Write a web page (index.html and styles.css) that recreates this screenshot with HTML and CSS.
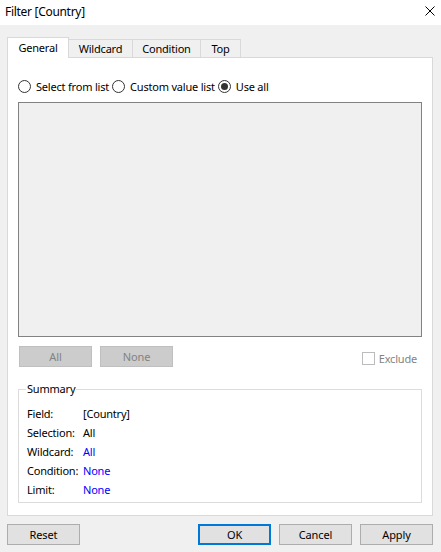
FILE: index.html
```html
<!DOCTYPE html>
<html>
<head>
<meta charset="utf-8">
<link rel="stylesheet" href="styles.css">
</head>
<body>
<div class="dialog">
  <div class="titlebar">
    <span class="title">Filter [Country]</span>
    <svg class="close" width="10" height="10" viewBox="0 0 10 10"><path d="M0.5 0.5 L9.5 9.5 M9.5 0.5 L0.5 9.5" stroke="#000" stroke-width="1" fill="none"/></svg>
  </div>
  <div class="body">
    <div class="tabs">
      <div class="tab active">General</div>
      <div class="tab">Wildcard</div>
      <div class="tab">Condition</div>
      <div class="tab">Top</div>
    </div>
    <div class="panel">
      <div class="radios">
        <label class="radio"><span class="circle"></span>Select from list</label>
        <label class="radio"><span class="circle"></span>Custom value list</label>
        <label class="radio"><span class="circle checked"></span>Use all</label>
      </div>
      <div class="listbox"></div>
      <div class="listactions">
        <button class="btn disabled">All</button>
        <button class="btn disabled">None</button>
        <span class="spacer"></span>
        <label class="check"><span class="box"></span>Exclude</label>
      </div>
      <fieldset class="summary">
        <legend>Summary</legend>
        <div class="rows">
          <span class="lbl">Field:</span><span class="val">[Country]</span>
          <span class="lbl">Selection:</span><span class="val">All</span>
          <span class="lbl">Wildcard:</span><span class="val link">All</span>
          <span class="lbl">Condition:</span><span class="val link">None</span>
          <span class="lbl">Limit:</span><span class="val link">None</span>
        </div>
      </fieldset>
    </div>
    <div class="footer">
      <button class="btn">Reset</button>
      <span class="spacer"></span>
      <button class="btn default">OK</button>
      <button class="btn">Cancel</button>
      <button class="btn">Apply</button>
    </div>
  </div>
</div>
</body>
</html>
```
FILE: styles.css
```css
* { box-sizing: border-box; }
html, body { margin: 0; padding: 0; }
body {
  width: 441px;
  height: 552px;
  background: #f0f0f0;
  font-family: "Noto Sans", sans-serif;
  font-size: 11px;
  letter-spacing: -0.2px;
  color: #000;
  overflow: hidden;
}
.dialog { width: 441px; height: 552px; display: flex; flex-direction: column; }
.titlebar {
  height: 25px;
  background: #fff;
  display: flex;
  align-items: center;
  padding: 0 6px 0 5px;
}
.title { flex: 1; font-size: 12px; line-height: 16px; margin-top: -2px; letter-spacing: -0.3px; }
.close { margin-top: -3px; }
.body { padding: 12px 8px 0 7px; flex: 1; display: flex; flex-direction: column; }
.tabs { display: flex; align-items: flex-end; height: 20px; }
.tab {
  height: 18px;
  border: 1px solid #d9d9d9;
  border-bottom: none;
  border-left: none;
  background: #f0f0f0;
  line-height: 18px;
  text-align: center;
  padding: 0;
}
.tab:nth-child(2) { width: 64px; }
.tab:nth-child(3) { width: 68px; }
.tab:nth-child(4) { width: 40px; }
.tab.active {
  width: 62px;
  height: 21px;
  margin-bottom: -1px;
  background: #fff;
  border-left: 1px solid #d9d9d9;
  line-height: 19px;
  position: relative;
  z-index: 1;
}
.panel {
  width: 426px;
  height: 459px;
  background: #fff;
  border: 1px solid #d9d9d9;
  padding: 20px 10px 0 10px;
  display: flex;
  flex-direction: column;
}
.radios { display: flex; align-items: center; height: 17px; }
.radio { display: flex; align-items: center; margin-right: 3px; }
.circle {
  width: 13px; height: 13px;
  border: 1px solid #333;
  border-radius: 50%;
  margin-right: 5px;
  display: inline-flex; align-items: center; justify-content: center;
}
.circle.checked::after {
  content: ""; width: 7px; height: 7px; border-radius: 50%; background: #333;
}
.listbox {
  margin-top: 7px;
  width: 404px;
  height: 235px;
  background: #f0f0f0;
  border: 1px solid #828282;
}
.listactions { display: flex; align-items: center; margin-top: 9px; height: 21px; padding-left: 1px; }
.btn {
  font-family: inherit;
  font-size: 11px;
  letter-spacing: -0.1px;
  width: 73px;
  height: 21px;
  background: #e1e1e1;
  border: 1px solid #adadad;
  color: #000;
  padding: 0;
  margin: 0 8px 0 0;
}
.btn.disabled { background: #cccccc; border-color: #bfbfbf; color: #838383; }
.spacer { flex: 1; }
.check { display: flex; align-items: center; color: #838383; margin-right: 5px; margin-top: 3px; }
.box { width: 13px; height: 13px; border: 1px solid #bcbcbc; margin-right: 4px; }
.summary {
  margin: 15px 0 0 0;
  width: 404px;
  height: 121px;
  border: 1px solid #dcdcdc;
  padding: 8px 8px 0 8px;
}
.summary legend { padding: 0 1px; margin-left: -1px; line-height: 14px; }
.rows {
  display: grid;
  grid-template-columns: 56px 1fr;
  grid-auto-rows: 19px;
  align-items: center;
}
.val.link { color: #0000ff; }
.footer { display: flex; margin-top: 8px; height: 21px; }
.footer .btn:last-child { margin-right: 0; }
.btn.default { border: 2px solid #0078d7; }
```
